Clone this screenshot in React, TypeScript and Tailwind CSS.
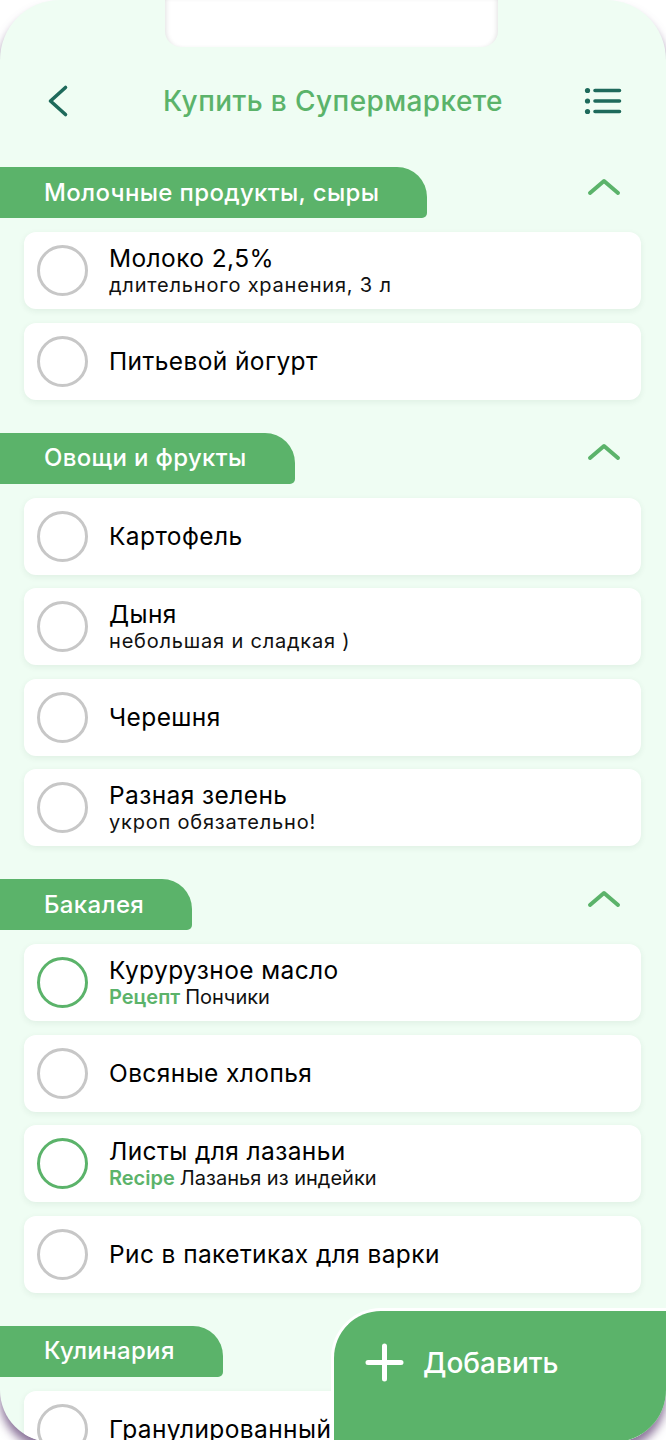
import React from "react";

type Item = { t: string; s?: string; r?: string; green?: boolean };
type Section = { title: string; items: Item[] };

const sections: Section[] = [
  {
    title: "Молочные продукты, сыры",
    items: [
      { t: "Молоко 2,5%", s: "длительного хранения, 3 л" },
      { t: "Питьевой йогурт" },
    ],
  },
  {
    title: "Овощи и фрукты",
    items: [
      { t: "Картофель" },
      { t: "Дыня", s: "небольшая и сладкая )" },
      { t: "Черешня" },
      { t: "Разная зелень", s: "укроп обязательно!" },
    ],
  },
  {
    title: "Бакалея",
    items: [
      { t: "Курурузное масло", r: "Рецепт", s: "Пончики", green: true },
      { t: "Овсяные хлопья" },
      { t: "Листы для лазаньи", r: "Recipe", s: "Лазанья из индейки", green: true },
      { t: "Рис в пакетиках для варки" },
    ],
  },
  {
    title: "Кулинария",
    items: [{ t: "Гранулированный чеснок" }, { t: "Панировочные сухари" }],
  },
];

function ChevronUp() {
  return (
    <svg width="34" height="18" viewBox="0 0 34 18" fill="none">
      <path d="M3 15 L17 3 L31 15" stroke="#5bb36a" strokeWidth="4" strokeLinecap="round" strokeLinejoin="round" />
    </svg>
  );
}

function Card({ item }: { item: Item }) {
  return (
    <div className="flex h-[77px] items-center rounded-[12px] bg-white pl-[13px] shadow-[0_2px_6px_rgba(40,80,50,0.08)]">
      <div
        className={
          item.green
            ? "h-[51px] w-[51px] shrink-0 rounded-full border-[3.5px] border-[#5bb36a]"
            : "h-[51px] w-[51px] shrink-0 rounded-full border-[3.5px] border-[#c7c7c7]"
        }
      />
      <div className="ml-[21px] flex flex-col">
        <div className="text-[24.5px] leading-[26px] tracking-[0.4px] text-black whitespace-nowrap">{item.t}</div>
        {item.s &&
          (item.r ? (
            <div className="mt-[2px] text-[20px] leading-[24px] text-[#111] whitespace-nowrap">
              <span className="font-semibold text-[#5bb36a]">{item.r} </span>
              {item.s}
            </div>
          ) : (
            <div className="mt-[2px] text-[20px] leading-[24px] tracking-[0.8px] text-[#111] whitespace-nowrap">
              {item.s}
            </div>
          ))}
      </div>
    </div>
  );
}

export default function App() {
  return (
    <div className="min-h-[1440px] bg-white font-['Inter','Noto_Sans',sans-serif]">
      <div className="relative h-[1442px] w-[666px] overflow-hidden rounded-t-[60px] rounded-b-[52px] bg-[#effdf3] shadow-[0_8px_10px_rgba(100,70,120,0.75)]">
        {/* notch */}
        <div className="absolute left-[165px] top-0 h-[47px] w-[333px] rounded-b-[16px] bg-white shadow-[inset_4px_0_5px_-3px_rgba(0,0,0,0.12),inset_-4px_0_5px_-3px_rgba(0,0,0,0.12)]" />

        {/* header */}
        <div className="mt-[77px] flex h-[48px] items-center">
          <div className="flex w-[100px] pl-[47px]">
            <svg width="22" height="34" viewBox="0 0 22 34" fill="none">
              <path d="M18.5 3.5 L3.5 17 L18.5 30.5" stroke="#1e6a5b" strokeWidth="3.6" strokeLinecap="round" strokeLinejoin="round" />
            </svg>
          </div>
          <div className="flex-1 text-center text-[28px] font-medium leading-[34px] tracking-[0.4px] text-[#5bb36a] whitespace-nowrap">
            Купить в Супермаркете
          </div>
          <div className="flex w-[100px] justify-end pr-[44px]">
            <svg width="38" height="28" viewBox="0 0 38 28" fill="none">
              <circle cx="3.5" cy="3.5" r="2.6" fill="#1e6a5b" />
              <circle cx="3.5" cy="14" r="2.6" fill="#1e6a5b" />
              <circle cx="3.5" cy="24.5" r="2.6" fill="#1e6a5b" />
              <path d="M11 3.5 H35.5 M11 14 H35.5 M11 24.5 H35.5" stroke="#1e6a5b" strokeWidth="3.6" strokeLinecap="round" />
            </svg>
          </div>
        </div>

        {/* sections */}
        <div className="mt-[42px] flex flex-col gap-[33px]">
          {sections.map((sec) => (
            <div key={sec.title} className="flex flex-col">
              <div className="flex items-center justify-between">
                <div className="flex h-[51px] items-center rounded-tr-[30px] rounded-br-[5px] bg-[#5bb36a] pl-[44px] pr-[48px] text-[24px] font-medium tracking-[0.35px] text-white whitespace-nowrap">
                  {sec.title}
                </div>
                <div className="mb-[12px] mr-[45px]">
                  <ChevronUp />
                </div>
              </div>
              <div className="mx-[24px] mt-[14px] flex w-[617px] flex-col gap-[13.5px]">
                {sec.items.map((it) => (
                  <Card key={it.t} item={it} />
                ))}
              </div>
            </div>
          ))}
        </div>

        {/* add button */}
        <div className="absolute bottom-0 right-0 h-[134px] w-[335px] rounded-tl-[50px] border-l-[3px] border-t-[3px] border-white bg-[#5bb36a]">
          <div className="flex items-center pl-[31px] pt-[32px]">
            <svg width="39" height="39" viewBox="0 0 39 39" fill="none">
              <path d="M19.5 3 V36 M3 19.5 H36" stroke="white" strokeWidth="5" strokeLinecap="round" />
            </svg>
            <span className="ml-[19px] text-[28px] font-medium leading-[34px] text-white">Добавить</span>
          </div>
        </div>
      </div>
    </div>
  );
}
